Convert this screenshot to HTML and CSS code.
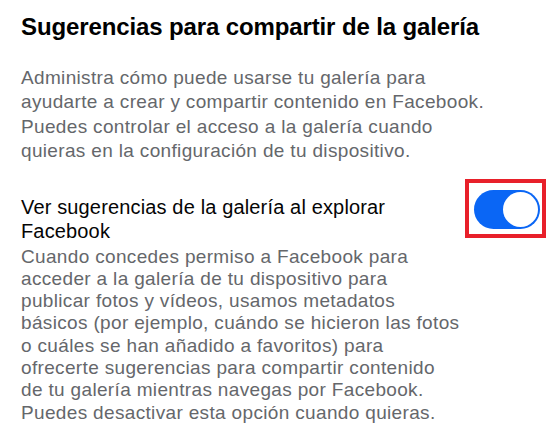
FILE: index.html
```html
<!DOCTYPE html>
<html lang="es">
<head>
<meta charset="utf-8">
<link rel="stylesheet" href="styles.css">
</head>
<body>
<div class="page">
  <h1 class="title">Sugerencias para compartir de la galería</h1>
  <p class="intro">Administra cómo puede usarse tu galería para<br>ayudarte a crear y compartir contenido en Facebook.<br>Puedes controlar el acceso a la galería cuando<br>quieras en la configuración de tu dispositivo.</p>
  <div class="setting">
    <div class="setting-text">
      <div class="setting-title">Ver sugerencias de la galería al explorar<br>Facebook</div>
      <p class="setting-desc">Cuando concedes permiso a Facebook para<br>acceder a la galería de tu dispositivo para<br>publicar fotos y vídeos, usamos metadatos<br>básicos (por ejemplo, cuándo se hicieron las fotos<br>o cuáles se han añadido a favoritos) para<br>ofrecerte sugerencias para compartir contenido<br>de tu galería mientras navegas por Facebook.<br>Puedes desactivar esta opción cuando quieras.</p>
    </div>
    <div class="highlight">
      <div class="toggle"><div class="knob"></div></div>
    </div>
  </div>
</div>
</body>
</html>
```
FILE: styles.css
```css
html, body {
  margin: 0;
  padding: 0;
  background: #fff;
}
.page {
  padding: 12px 0 0 21px;
  font-family: "Liberation Sans", Arial, sans-serif;
}
.title {
  margin: 0;
  font-size: 24px;
  font-weight: bold;
  letter-spacing: -0.12px;
  color: #000;
  line-height: 30px;
}
.intro {
  margin: 24px 0 0 0;
  font-size: 19px;
  letter-spacing: 0.34px;
  line-height: 24.3px;
  color: #65676b;
}
.setting {
  display: flex;
  justify-content: space-between;
  align-items: flex-start;
  margin-top: 31.8px;
}
.setting-title {
  font-size: 20px;
  letter-spacing: 0.15px;
  line-height: 24px;
  color: #050505;
}
.setting-desc {
  margin: 2.6px 0 0 0;
  font-size: 19px;
  letter-spacing: 0.34px;
  line-height: 22.3px;
  color: #65676b;
}
.highlight {
  margin-right: 4px;
  margin-top: -16px;
  border: 4px solid #e8202a;
  padding: 7px 2px 5px 5px;
}
.toggle {
  width: 66px;
  height: 39px;
  border-radius: 20px;
  background: #0a66f5;
  display: flex;
  justify-content: flex-end;
  align-items: center;
  box-sizing: border-box;
  padding-right: 2px;
}
.knob {
  width: 35px;
  height: 35px;
  border-radius: 50%;
  background: #fff;
}
```
